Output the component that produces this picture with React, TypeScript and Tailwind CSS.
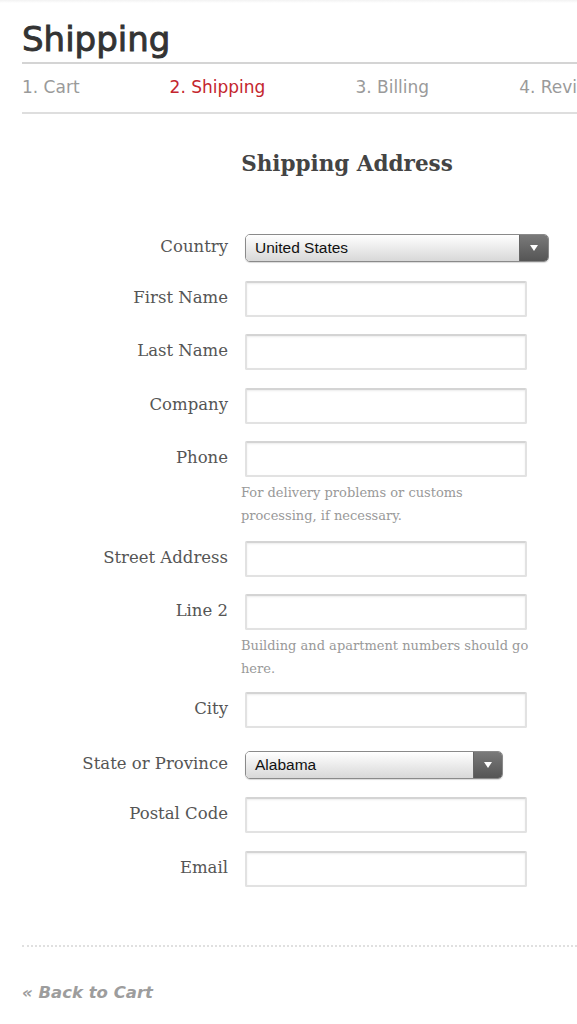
const serif = { fontFamily: '"DejaVu Serif", Georgia, serif' };

type Field = {
  label: string;
  kind: 'input' | 'select';
  mt: string;
  value?: string;
  width?: string;
  hint?: string[];
};

const fields: Field[] = [
  { label: 'Country', kind: 'select', mt: 'mt-0', value: 'United States', width: 'w-[304px]' },
  { label: 'First Name', kind: 'input', mt: 'mt-[19px]' },
  { label: 'Last Name', kind: 'input', mt: 'mt-[17px]' },
  { label: 'Company', kind: 'input', mt: 'mt-[18px]' },
  {
    label: 'Phone',
    kind: 'input',
    mt: 'mt-[17px]',
    hint: ['For delivery problems or customs', 'processing, if necessary.'],
  },
  { label: 'Street Address', kind: 'input', mt: 'mt-[14px]' },
  {
    label: 'Line 2',
    kind: 'input',
    mt: 'mt-[17px]',
    hint: ['Building and apartment numbers should go', 'here.'],
  },
  { label: 'City', kind: 'input', mt: 'mt-[12px]' },
  { label: 'State or Province', kind: 'select', mt: 'mt-[23px]', value: 'Alabama', width: 'w-[258px]' },
  { label: 'Postal Code', kind: 'input', mt: 'mt-[18px]' },
  { label: 'Email', kind: 'input', mt: 'mt-[18px]' },
];

function FakeSelect({ value, width }: { value: string; width: string }) {
  return (
    <div
      className={`${width} h-[28px] flex rounded-[5px] border border-[#8a8a8a] overflow-hidden shadow-[0_1px_1px_rgba(0,0,0,0.15)]`}
    >
      <div className="flex-1 flex items-center pl-[9px] bg-gradient-to-b from-white to-[#d8d8d8] text-[15.5px] text-[#111] font-['Liberation_Sans',Arial,sans-serif]">
        {value}
      </div>
      <div className="w-[29px] flex items-center justify-center bg-gradient-to-b from-[#7a7a7a] to-[#555] border-l border-[#666]">
        <svg width="8" height="6" viewBox="0 0 8 6">
          <path d="M0 0 L8 0 L4 6 Z" fill="#fff" />
        </svg>
      </div>
    </div>
  );
}

function FormRow({ field }: { field: Field }) {
  return (
    <div className={`flex flex-col ${field.mt}`}>
      <div className="flex items-center">
        <label
          className="w-[228px] text-right text-[16.5px] leading-[20px] text-[#555] pb-[2px]"
          style={serif}
        >
          {field.label}
        </label>
        <div className="ml-[17px]">
          {field.kind === 'select' ? (
            <FakeSelect value={field.value!} width={field.width!} />
          ) : (
            <input
              type="text"
              className="block w-[282px] h-[36px] bg-white border-2 border-[#e2e2e2] border-t-[#d4d4d4] rounded-[2px] shadow-[inset_0_1px_2px_rgba(0,0,0,0.08)] outline-none"
            />
          )}
        </div>
      </div>
      {field.hint && (
        <div
          className="ml-[241px] mt-[4px] text-[13px] leading-[23px] text-[#999]"
          style={serif}
        >
          {field.hint.map((line) => (
            <div key={line}>{line}</div>
          ))}
        </div>
      )}
    </div>
  );
}

export default function App() {
  const steps = ['1. Cart', '2. Shipping', '3. Billing', '4. Review'];

  return (
    <div className="w-[577px] h-[1024px] overflow-hidden bg-white pl-[22px] font-['DejaVu_Sans',Verdana,sans-serif]">
      <div className="h-[3px] -ml-[22px] bg-gradient-to-b from-[#f2f2f2] to-white" />
      <h1 className="pt-[17px] pb-[4px] text-[34px] leading-[38px] text-[#333] border-b-2 border-[#d4d4d4] [-webkit-text-stroke:0.9px_#333]">
        Shipping
      </h1>

      <div className="h-[50px] flex items-center gap-[90px] whitespace-nowrap border-b-2 border-[#dedede] text-[17px] text-[#9a9a9a]">
        {steps.map((step, i) => (
          <span key={step} className={i === 1 ? 'text-[#c4262e]' : ''}>
            {step}
          </span>
        ))}
      </div>

      <h2
        className="mt-[35px] text-center pl-[95px] text-[21.5px] leading-[30px] font-bold text-[#444]"
        style={serif}
      >
        Shipping Address
      </h2>

      <div className="mt-[55px] -ml-[22px] flex flex-col">
        {fields.map((f) => (
          <FormRow key={f.label} field={f} />
        ))}
      </div>

      <div className="mt-[58px] border-t-2 border-dotted border-[#e0e0e0]" />

      <a
        href="#"
        className="block mt-[35px] text-[16.5px] leading-[22px] font-bold italic text-[#9d9d9d]"
      >
        « Back to Cart
      </a>
    </div>
  );
}
